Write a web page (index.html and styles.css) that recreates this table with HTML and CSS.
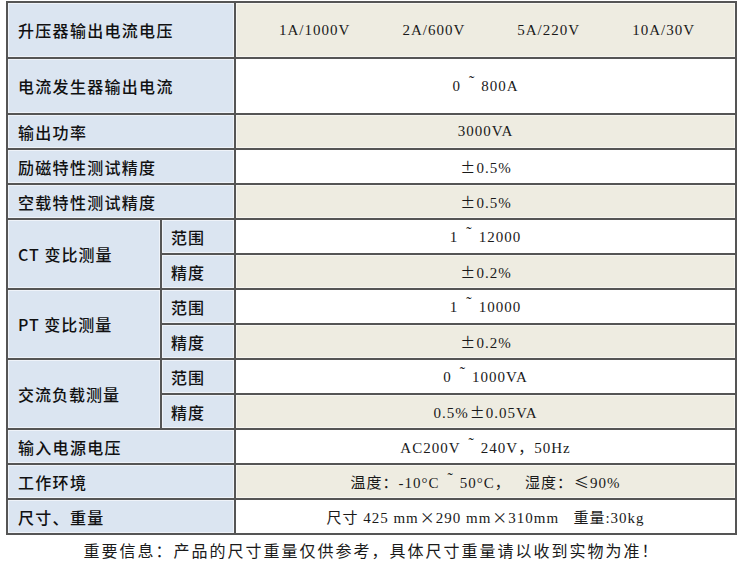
FILE: index.html
```html
<!DOCTYPE html>
<html lang="zh">
<head>
<meta charset="utf-8">
<link rel="stylesheet" href="styles.css">
</head>
<body>
<table class="spec">
  <colgroup>
    <col class="c-label">
    <col class="c-sub">
    <col class="c-val">
  </colgroup>
  <tr class="tall">
    <th colspan="2">升压器输出电流电压</th>
    <td class="beige"><div class="quad"><span>1A/1000V</span><span>2A/600V</span><span>5A/220V</span><span>10A/30V</span></div></td>
  </tr>
  <tr class="tall">
    <th colspan="2">电流发生器输出电流</th>
    <td>0<span class="tl">˜</span>800A</td>
  </tr>
  <tr>
    <th colspan="2">输出功率</th>
    <td class="beige">3000VA</td>
  </tr>
  <tr>
    <th colspan="2">励磁特性测试精度</th>
    <td><span class="fw">±</span>0.5%</td>
  </tr>
  <tr>
    <th colspan="2">空载特性测试精度</th>
    <td class="beige"><span class="fw">±</span>0.5%</td>
  </tr>
  <tr>
    <th rowspan="2" class="group">CT 变比测量</th>
    <th class="sub">范围</th>
    <td>1<span class="tl">˜</span>12000</td>
  </tr>
  <tr>
    <th class="sub">精度</th>
    <td class="beige"><span class="fw">±</span>0.2%</td>
  </tr>
  <tr>
    <th rowspan="2" class="group">PT 变比测量</th>
    <th class="sub">范围</th>
    <td>1<span class="tl">˜</span>10000</td>
  </tr>
  <tr>
    <th class="sub">精度</th>
    <td class="beige"><span class="fw">±</span>0.2%</td>
  </tr>
  <tr>
    <th rowspan="2" class="group">交流负载测量</th>
    <th class="sub">范围</th>
    <td>0<span class="tl">˜</span>1000VA</td>
  </tr>
  <tr>
    <th class="sub">精度</th>
    <td class="beige">0.5%<span class="fw">±</span>0.05VA</td>
  </tr>
  <tr>
    <th colspan="2">输入电源电压</th>
    <td>AC200V<span class="tl">˜</span>240V<span class="cjk">，</span>50Hz</td>
  </tr>
  <tr>
    <th colspan="2">工作环境</th>
    <td class="beige"><span class="cjk">温度：</span>-10°C<span class="tl">˜</span>50°C<span class="cjk">，</span>&nbsp;&nbsp;&nbsp;<span class="cjk">湿度：</span><span class="fw">≤</span>90%</td>
  </tr>
  <tr>
    <th colspan="2">尺寸、重量</th>
    <td><span class="cjk">尺寸</span> 425 mm<span class="fw">×</span>290 mm<span class="fw">×</span>310mm&nbsp;&nbsp;&nbsp;<span class="cjk">重量</span>:30kg</td>
  </tr>
</table>
<p class="note">重要信息：产品的尺寸重量仅供参考，具体尺寸重量请以收到实物为准！</p>
</body>
</html>
```

FILE: styles.css
```css
html, body {
  margin: 0;
  padding: 0;
  background: #ffffff;
}

body {
  padding: 1px 0 0 6px;
  font-family: "Liberation Serif", "Noto Sans CJK SC", serif;
  color: #1a1a1a;
}

.spec {
  border-collapse: collapse;
  width: 731px;
  table-layout: fixed;
  border: 2px solid #555555;
}

.c-label { width: 154px; }
.c-sub { width: 74px; }
.c-val { width: auto; }

.spec th,
.spec td {
  border: 2px solid #555555;
  height: 33px;
  padding: 0;
  box-shadow: inset 0 0 0 1px rgba(255, 255, 255, 0.55);
}

.spec tr.tall th,
.spec tr.tall td {
  height: 54px;
}

.spec th {
  background: #dbe5f1;
  text-align: left;
  padding-left: 10px;
  font-family: "Noto Sans CJK SC", sans-serif;
  font-weight: 500;
  font-size: 16px;
  letter-spacing: 1.3px;
  color: #111111;
}

.spec th.group {
  letter-spacing: 1px;
}

.spec th.sub {
  padding-left: 9px;
  letter-spacing: 1px;
}

.spec td {
  background: #ffffff;
  text-align: center;
  font-size: 15px;
  letter-spacing: 1px;
}

.spec td.beige {
  background: #eeece1;
}

.fw {
  display: inline-block;
  width: 17px;
  text-align: center;
  font-family: "Noto Sans CJK SC", sans-serif;
  font-size: 15px;
  letter-spacing: 0;
}

.tl {
  display: inline-block;
  font-size: 16px;
  margin: 0 7px 0 8px;
  transform: translateY(-4px);
  letter-spacing: 0;
}

.cjk {
  font-family: "Noto Sans CJK SC", sans-serif;
  font-weight: 400;
  letter-spacing: 1px;
}

.quad {
  display: flex;
  justify-content: space-between;
  padding: 0 40px 0 43px;
}

.note {
  margin: 4px 0 0 0;
  width: 731px;
  text-align: center;
  font-family: "Noto Sans CJK SC", sans-serif;
  font-size: 16px;
  line-height: 22px;
  letter-spacing: 2px;
  color: #1a1a1a;
}
```
